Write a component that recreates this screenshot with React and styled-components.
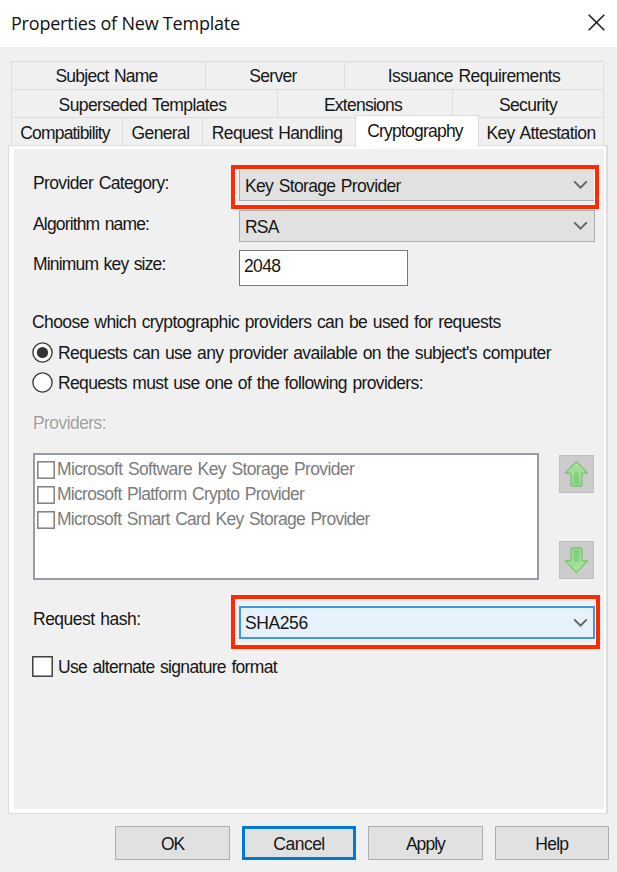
import React, { useState } from 'react';
import styled, { createGlobalStyle, css } from 'styled-components';

const grey = '#f0f0f0';
const line = '#dcdcdc';
const blue = '#0078d7';
const red = '#ff2a00';

const GlobalStyle = createGlobalStyle`
  * {
    box-sizing: border-box;
  }

  body {
    margin: 0;
    background: ${grey};
  }
`;

const Dialog = styled.div`
  display: flex;
  flex-direction: column;
  width: 617px;
  height: 872px;
  overflow: hidden;
  background: ${grey};
  color: #161616;
  font-family: 'Liberation Sans', Arial, sans-serif;
  font-size: 17.5px;
  line-height: 20px;
  word-spacing: 1.3px;
  white-space: nowrap;
`;

const TitleBar = styled.header`
  display: flex;
  align-items: center;
  justify-content: space-between;
  height: 47px;
  padding: 0 12px 1px 11px;
  background: #fff;
`;

const Title = styled.h1`
  margin: 0;
  font-family: 'Open Sans', 'Noto Sans', sans-serif;
  font-size: 18px;
  font-weight: 400;
  line-height: 24px;
  letter-spacing: -0.21px;
  word-spacing: 0;
  color: #111;
`;

const CloseButton = styled.button`
  display: flex;
  margin-bottom: 2px;
  padding: 0;
  border: 0;
  background: none;
`;

const Text = styled.span`
  letter-spacing: ${({ $track }) => $track}px;
`;

const Tabs = styled.nav`
  display: flex;
  flex-direction: column;
  margin: 14px 13px 0 11px;
  border-top: 1px solid ${line};
`;

const Tab = styled.button`
  display: flex;
  justify-content: center;
  padding: 5px 4px 0 0;
  border: 0;
  border-right: 1px solid ${line};
  background: ${grey};
  color: inherit;
  font: inherit;
  word-spacing: inherit;

  &:last-child {
    padding-right: 0;
  }

  ${({ $active }) =>
    $active &&
    css`
      z-index: 1;
      margin: -3px 0 -2px -1px;
      border: 1px solid ${line};
      border-bottom: 0;
      background: #fff;
    `}
`;

const TabRow = styled.div`
  display: grid;
  grid-template-columns: ${({ $columns }) => $columns};
  height: 28px;
  border-left: 1px solid ${line};

  & + & {
    border-top: 1px solid ${line};
  }

  &:first-child {
    height: 27px;
  }

  &:first-child ${Tab} {
    padding-top: 4px;
  }
`;

const Sheet = styled.main`
  height: 669px;
  margin: 0 9px 0 8px;
  padding: 3px 2px 4px 5px;
  border: 1px solid ${line};
  border-right-width: 2px;
  background: #fff;
`;

const SheetBody = styled.div`
  display: flex;
  flex-direction: column;
  height: 100%;
  padding: 20px 9px 0 19px;
  background: ${grey};
`;

const Field = styled.div`
  display: flex;
  align-items: flex-start;
  height: ${({ $height }) => $height}px;
  margin-top: ${({ $gap = 0 }) => $gap}px;
`;

const Label = styled.label`
  width: 206px;
  padding-top: ${({ $top = 4 }) => $top}px;
`;

const Combo = styled.div`
  position: relative;
  display: flex;
  align-items: center;
  justify-content: space-between;
  width: 356px;
  height: 32px;
  padding: 2px 6px 0 5px;
  border: 1px solid #adadad;
  background: #e1e1e1;

  svg {
    margin-top: -2px;
  }

  ${({ $focused }) =>
    $focused &&
    css`
      height: 33px;
      padding: 0 5px 0 4px;
      border: 2px solid #3c98e4;
      background: #e5f1fb;

      svg {
        margin-top: 0;
      }
    `}
`;

const Callout = styled.div`
  position: absolute;
  inset: ${({ $inset }) => $inset};
  border: 4px solid ${red};
  box-shadow: inset 0 0 0 1px #faf6f5;
  pointer-events: none;
`;

const Input = styled.input`
  width: 169px;
  height: 36px;
  padding: 0 4px 4px;
  border: 1px solid #7a7a7a;
  outline: 0;
  background: #fff;
  color: inherit;
  font: inherit;
  letter-spacing: -0.65px;
`;

const Intro = styled.p`
  margin: 26px 0 0 -1px;
`;

const Choice = styled.div`
  display: flex;
  align-items: center;
  gap: 5px;
  height: 21px;
  margin: ${({ $gap }) => $gap}px 0 0 -1px;

  span {
    padding-top: 1px;
  }
`;

const ProvidersLabel = styled.p`
  margin: 20px 0;
  color: #a0a0a0;
  text-shadow: 1px 1px 0 #fff;
`;

const Providers = styled.div`
  display: flex;
  justify-content: space-between;
  height: 127px;
  padding-right: 1px;
`;

const List = styled.ul`
  width: 506px;
  margin: 0;
  padding: 2px 0 0 2px;
  border: 2px solid #989ca4;
  background: #fff;
  color: #7c7c7c;
  list-style: none;
`;

const ListItem = styled.li`
  display: flex;
  align-items: center;
  gap: 2px;
  height: 25px;

  span {
    padding-bottom: 2px;
  }
`;

const Arrows = styled.div`
  display: flex;
  flex-direction: column;
  justify-content: space-between;
  padding: 2px 0 1px;
`;

const ArrowButton = styled.button`
  width: 35px;
  height: 38px;
  padding: 0 1px 0 0;
  border: 1px solid #bfbfbf;
  background: #ccc;

  svg {
    display: block;
    margin: auto;
    transform: ${({ $down }) => ($down ? 'scaleY(-1)' : 'none')};
  }
`;

const Footer = styled.footer`
  display: flex;
  justify-content: flex-end;
  gap: 12px;
  padding: 12px 8px 0 0;
`;

const Button = styled.button`
  width: 114.4px;
  height: 34px;
  padding: 1px 0 0;
  border: ${({ $default }) => ($default ? `3px solid ${blue}` : '1px solid #adadad')};
  background: #e1e1e1;
  color: inherit;
  font: inherit;
`;

const Chevron = () => (
  <svg width="15" height="10" viewBox="0 0 15 10" fill="none" stroke="#606060" strokeWidth="1.8">
    <path d="M1.2 1.4 7.5 7.7l6.3-6.3" />
  </svg>
);

const Cross = () => (
  <svg width="17" height="17" viewBox="0 0 17 17" fill="none" stroke="#222" strokeWidth="1.6">
    <path d="M.7.7l15.6 15.6M16.3.7.7 16.3" />
  </svg>
);

const Radio = ({ checked }) => (
  <svg width="21" height="21" viewBox="0 0 21 21">
    <circle cx="10.5" cy="10.5" r="9.6" fill="#fff" stroke="#3c3c3c" strokeWidth="1.4" />
    {checked && <circle cx="10.5" cy="10.5" r="5.6" fill="#333" />}
  </svg>
);

const Check = ({ size, color }) => (
  <svg width={size} height={size} viewBox={`0 0 ${size} ${size}`}>
    <rect
      x="0.8"
      y="0.8"
      width={size - 1.6}
      height={size - 1.6}
      fill="#fff"
      stroke={color}
      strokeWidth="1.4"
    />
  </svg>
);

const GreenArrow = () => (
  <svg width="25" height="28" viewBox="0 0 25 28">
    <defs>
      <linearGradient id="green" x1="0" y1="0" x2="0" y2="1">
        <stop offset="0" stopColor="#aee6a0" />
        <stop offset="1" stopColor="#7fd27e" />
      </linearGradient>
    </defs>
    <path
      d="M12.5 1.6 23.6 13.2H18v11q0 2-2 2H9q-2 0-2-2v-11H1.4z"
      fill="url(#green)"
      stroke="#7dbb76"
      strokeWidth="1.2"
      strokeLinejoin="round"
    />
    <path
      d="M12.5 3.8 20.4 12h-3.7v11.6q0 1.2-1.2 1.2h-6q-1.2 0-1.2-1.2V12H4.6z"
      fill="none"
      stroke="#b0e6a6"
      strokeWidth="1"
      opacity="0.6"
    />
    <path d="M12.5 12v11" stroke="#6fc870" strokeWidth="4" opacity="0.45" />
  </svg>
);

const tabRows = [
  {
    columns: '194px 139px 1fr',
    tabs: [
      ['Subject Name', -0.75],
      ['Server', -0.66],
      ['Issuance Requirements', -0.61],
    ],
  },
  {
    columns: '266px 175px 1fr',
    tabs: [
      ['Superseded Templates', -0.61],
      ['Extensions', -0.74],
      ['Security', -0.64],
    ],
  },
  {
    columns: '111px 80px 153px 123px 1fr',
    tabs: [
      ['Compatibility', -0.82],
      ['General', -0.62],
      ['Request Handling', -0.62],
      ['Cryptography', -0.78],
      ['Key Attestation', -0.59],
    ],
  },
];

const providers = [
  ['Microsoft Software Key Storage Provider', -0.62],
  ['Microsoft Platform Crypto Provider', -0.71],
  ['Microsoft Smart Card Key Storage Provider', -0.74],
];

const buttons = [
  ['OK', -1],
  ['Cancel', -0.5],
  ['Apply', -0.95],
  ['Help', -0.75],
];

const App = () => {
  const [keySize, setKeySize] = useState('2048');

  return (
    <>
      <GlobalStyle />
      <Dialog>
        <TitleBar>
          <Title>Properties of New Template</Title>
          <CloseButton aria-label="Close">
            <Cross />
          </CloseButton>
        </TitleBar>
        <Tabs>
          {tabRows.map(({ columns, tabs }) => (
            <TabRow key={columns} $columns={columns}>
              {tabs.map(([name, track]) => (
                <Tab key={name} $active={name === 'Cryptography'}>
                  <Text $track={track}>{name}</Text>
                </Tab>
              ))}
            </TabRow>
          ))}
        </Tabs>
        <Sheet>
          <SheetBody>
            <Field $height={41}>
              <Label>
                <Text $track={-0.63}>Provider Category:</Text>
              </Label>
              <Combo>
                <Text $track={-0.66}>Key Storage Provider</Text>
                <Chevron />
                <Callout $inset="-5px -5px -9px -9px" />
              </Combo>
            </Field>
            <Field $height={40}>
              <Label>
                <Text $track={-0.84}>Algorithm name:</Text>
              </Label>
              <Combo>
                <Text $track={-0.8}>RSA</Text>
                <Chevron />
              </Combo>
            </Field>
            <Field $height={36}>
              <Label>
                <Text $track={-0.82}>Minimum key size:</Text>
              </Label>
              <Input value={keySize} onChange={(e) => setKeySize(e.target.value)} />
            </Field>
            <Intro>
              <Text $track={-0.59}>
                Choose which cryptographic providers can be used for requests
              </Text>
            </Intro>
            <Choice $gap={10}>
              <Radio checked />
              <Text $track={-0.58}>
                Requests can use any provider available on the subject's computer
              </Text>
            </Choice>
            <Choice $gap={9}>
              <Radio />
              <Text $track={-0.64}>Requests must use one of the following providers:</Text>
            </Choice>
            <ProvidersLabel>
              <Text $track={-0.57}>Providers:</Text>
            </ProvidersLabel>
            <Providers>
              <List>
                {providers.map(([name, track]) => (
                  <ListItem key={name}>
                    <Check size={18} color="#777" />
                    <Text $track={track}>{name}</Text>
                  </ListItem>
                ))}
              </List>
              <Arrows>
                <ArrowButton aria-label="Move up">
                  <GreenArrow />
                </ArrowButton>
                <ArrowButton $down aria-label="Move down">
                  <GreenArrow />
                </ArrowButton>
              </Arrows>
            </Providers>
            <Field $height={33} $gap={26}>
              <Label $top={3}>
                <Text $track={-0.51}>Request hash:</Text>
              </Label>
              <Combo $focused>
                <Text $track={-0.4}>SHA256</Text>
                <Chevron />
                <Callout $inset="-13px -7px -12px -10px" />
              </Combo>
            </Field>
            <Choice $gap={17}>
              <Check size={21} color="#333" />
              <Text $track={-0.68}>Use alternate signature format</Text>
            </Choice>
          </SheetBody>
        </Sheet>
        <Footer>
          {buttons.map(([name, track]) => (
            <Button key={name} $default={name === 'Cancel'}>
              <Text $track={track}>{name}</Text>
            </Button>
          ))}
        </Footer>
      </Dialog>
    </>
  );
};
export default App;
